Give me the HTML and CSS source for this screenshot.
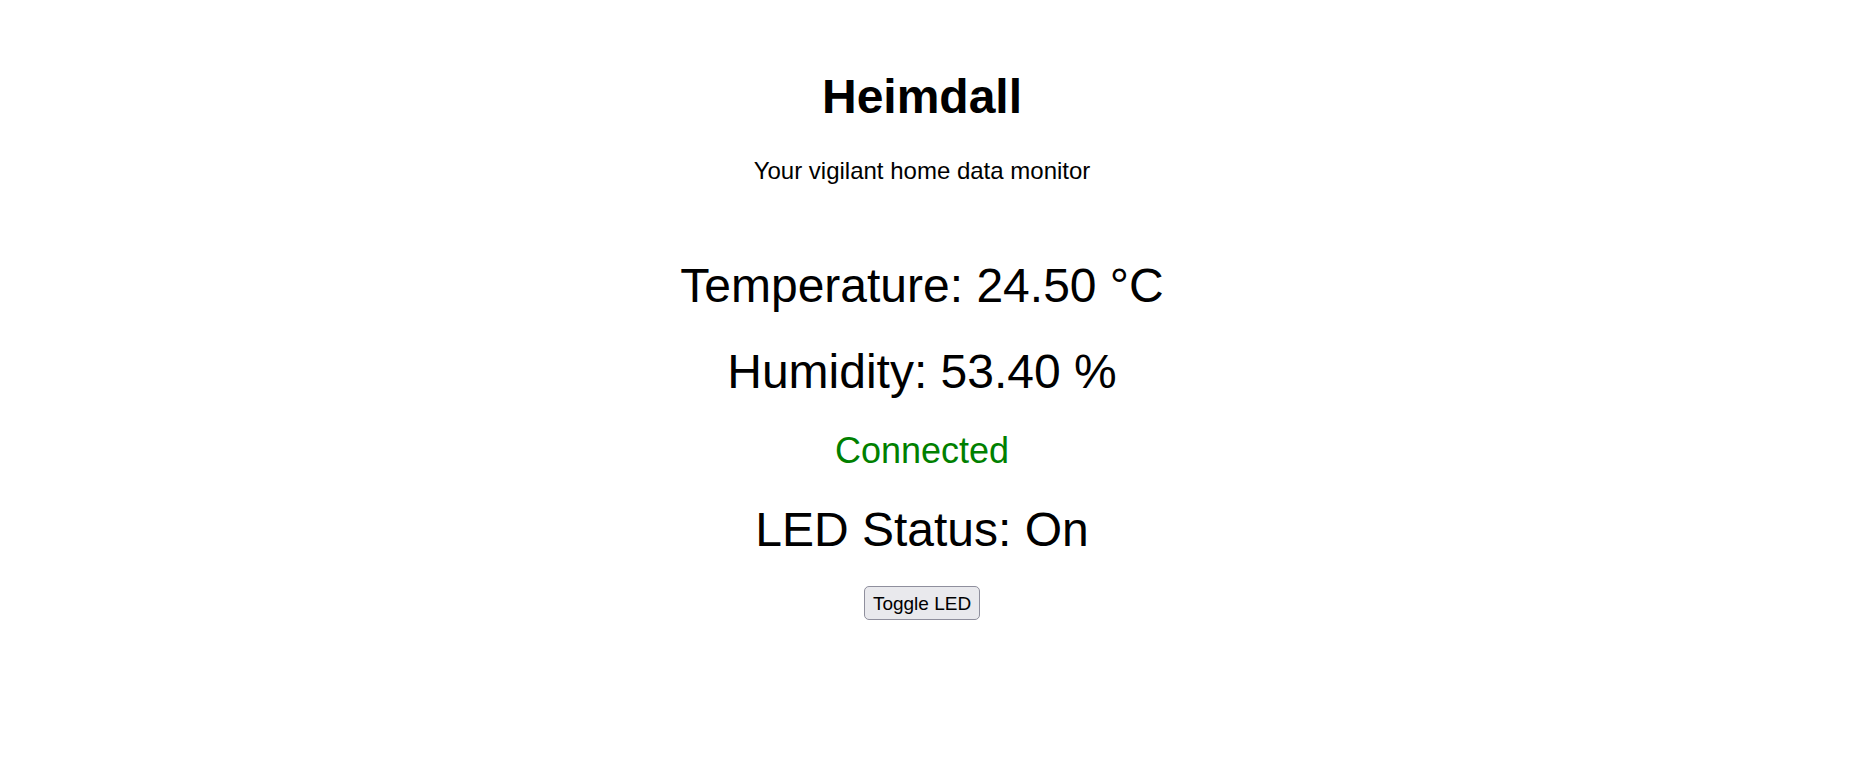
FILE: index.html
```html
<!DOCTYPE html>
<html lang="en">
<head>
<meta charset="utf-8">
<title>Heimdall</title>
<link rel="stylesheet" href="styles.css">
</head>
<body>
<main class="page">
  <h1 class="title">Heimdall</h1>
  <p class="subtitle">Your vigilant home data monitor</p>
  <p class="reading reading-temp">Temperature: 24.50 °C</p>
  <p class="reading reading-hum">Humidity: 53.40 %</p>
  <p class="status">Connected</p>
  <p class="reading reading-led">LED Status: On</p>
  <button class="toggle" type="button">Toggle LED</button>
</main>
</body>
</html>
```
FILE: styles.css
```css
html, body {
  margin: 0;
  padding: 0;
  background: #ffffff;
}

body {
  font-family: "Liberation Sans", Arial, sans-serif;
  color: #000000;
}

.page {
  display: flex;
  flex-direction: column;
  align-items: center;
  text-align: center;
  padding-top: 69px;
  margin-right: 29px;
}

.title {
  margin: 0;
  font-size: 48px;
  font-weight: bold;
  line-height: 55px;
}

.subtitle {
  margin: 33px 0 0;
  font-size: 24px;
  line-height: 28px;
}

.reading {
  margin: 0;
  font-size: 48px;
  line-height: 55px;
}

.reading-temp {
  margin-top: 73px;
}

.reading-hum {
  margin-top: 31px;
}

.status {
  margin: 31px 0 0;
  font-size: 36px;
  line-height: 41px;
  color: #008000;
}

.reading-led {
  margin-top: 31px;
}

.toggle {
  margin-top: 29px;
  font-family: "Liberation Sans", Arial, sans-serif;
  font-size: 19px;
  line-height: 22px;
  color: #000000;
  background: #e9e9ed;
  border: 1px solid #8f8f9d;
  border-radius: 5px;
  padding: 6px 7.5px 4px;
}
```
